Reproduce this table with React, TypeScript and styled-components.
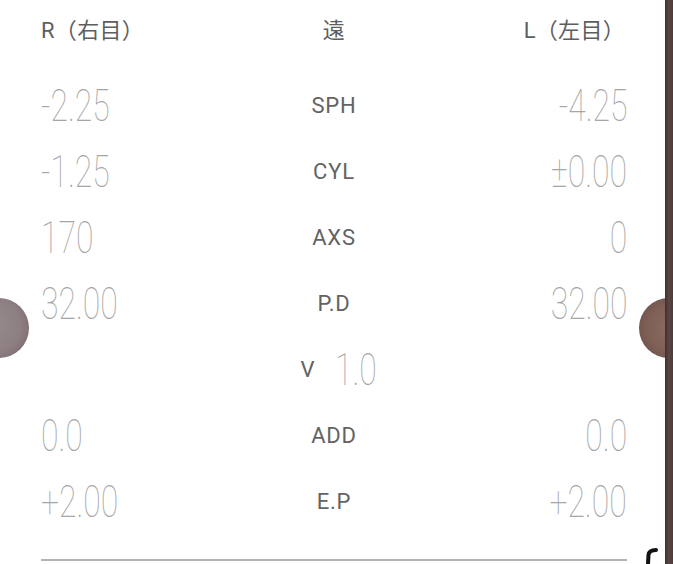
import React from "react";
import styled, { createGlobalStyle } from "styled-components";

const Global = createGlobalStyle`
  html, body { margin: 0; padding: 0; background: #ffffff; }
  body { font-family: Roboto, "Noto Sans CJK JP", sans-serif; }
`;

const Page = styled.div`
  position: relative;
  width: 673px;
  height: 564px;
  overflow: hidden;
  display: flex;
  background: #ffffff;
`;

const Sheet = styled.div`
  flex: 1;
  display: flex;
  flex-direction: column;
  padding: 0 38px 0 41px;
`;

const Strip = styled.div`
  position: relative;
  z-index: 2;
  width: 8px;
  background: linear-gradient(90deg, #3e302e 0%, #5a4744 50%, #4a3a38 100%);
`;

const Row = styled.div<{ $h: number }>`
  display: grid;
  grid-template-columns: 1fr auto 1fr;
  align-items: center;
  height: ${(p) => p.$h}px;
`;

const HeadText = styled.div<{ $align: "left" | "center" | "right" }>`
  font-family: Roboto, "Noto Sans CJK JP", sans-serif;
  font-size: 22px;
  letter-spacing: 0.3px;
  color: #5e5e5e;
  text-align: ${(p) => p.$align};
  padding-right: ${(p) => (p.$align === "right" ? "2px" : "0")};
`;

const Label = styled.div`
  font-family: Roboto, sans-serif;
  font-size: 22px;
  letter-spacing: 0.8px;
  color: #636363;
  text-align: center;
  display: flex;
  align-items: center;
  gap: 18px;
`;

const Num = styled.div<{ $align: "left" | "right" }>`
  font-family: Roboto, sans-serif;
  font-weight: 100;
  font-size: 45px;
  line-height: 1;
  color: #a6a6a6;
  text-align: ${(p) => p.$align};
  transform: scaleX(0.71);
  transform-origin: ${(p) => (p.$align === "left" ? "left" : "right")} center;
  white-space: nowrap;
`;

const InlineNum = styled.span`
  display: inline-block;
  font-family: Roboto, sans-serif;
  font-weight: 100;
  font-size: 45px;
  line-height: 1;
  letter-spacing: 0;
  color: #a6a6a6;
  transform: scaleX(0.71);
  transform-origin: left center;
  width: 40px;
  margin-left: 2px;
  margin-right: -8px;
`;

const Rule = styled.div`
  margin-top: 25px;
  height: 2px;
  background: #b4b4b4;
`;

const Knob = styled.div<{ $side: "left" | "right" }>`
  position: absolute;
  top: 298px;
  width: 60px;
  height: 60px;
  border-radius: 50%;
  ${(p) =>
    p.$side === "left"
      ? `left: -31px;
         background: radial-gradient(circle at 40% 45%, #978a8d 0%, #8d7f82 55%, #7a6b6e 85%, #5e5053 100%);`
      : `left: 639px;
         background: radial-gradient(circle at 55% 50%, #8d6c62 0%, #7e6057 55%, #6c5048 85%, #553e38 100%);`}
`;

const Hook = styled.svg`
  position: absolute;
  left: 640px;
  top: 544px;
`;

type R = { l: string; label: string; r: string };
const rows: R[] = [
  { l: "-2.25", label: "SPH", r: "-4.25" },
  { l: "-1.25", label: "CYL", r: "±0.00" },
  { l: "170", label: "AXS", r: "0" },
  { l: "32.00", label: "P.D", r: "32.00" },
];
const rows2: R[] = [
  { l: "0.0", label: "ADD", r: "0.0" },
  { l: "+2.00", label: "E.P", r: "+2.00" },
];

export default function App() {
  return (
    <>
      <Global />
      <Page>
        <Sheet>
          <Row $h={56}>
            <HeadText $align="left">R（右目）</HeadText>
            <HeadText $align="center">遠</HeadText>
            <HeadText $align="right">L（左目）</HeadText>
          </Row>
          <div style={{ height: 16 }} />
          {rows.map((r) => (
            <Row $h={66} key={r.label}>
              <Num $align="left">{r.l}</Num>
              <Label>{r.label}</Label>
              <Num $align="right">{r.r}</Num>
            </Row>
          ))}
          <Row $h={66}>
            <div />
            <Label>
              V<InlineNum>1.0</InlineNum>
            </Label>
            <div />
          </Row>
          {rows2.map((r) => (
            <Row $h={66} key={r.label}>
              <Num $align="left">{r.l}</Num>
              <Label>{r.label}</Label>
              <Num $align="right">{r.r}</Num>
            </Row>
          ))}
          <Rule />
        </Sheet>
        <Strip />
        <Knob $side="left" />
        <Knob $side="right" />
        <Hook width="24" height="20" viewBox="0 0 24 20">
          <path d="M8 20 L8.5 11 Q9 6 16 6" stroke="#111" strokeWidth="4" fill="none" strokeLinecap="round" />
        </Hook>
      </Page>
    </>
  );
}
